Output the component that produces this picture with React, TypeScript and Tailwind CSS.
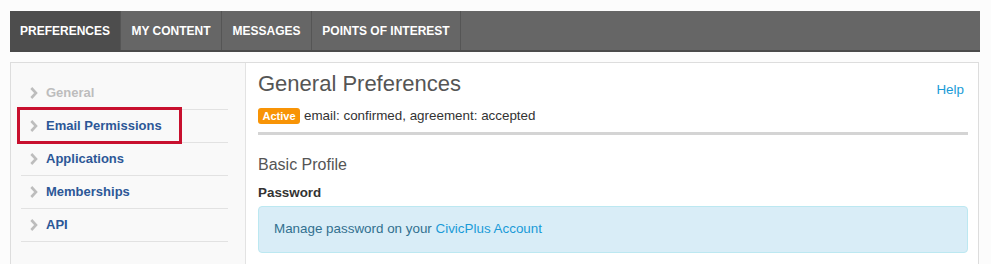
import React from "react";

const Chevron = () => (
  <svg width="8" height="12" viewBox="0 0 8 12" className="shrink-0">
    <polyline points="1.3,1 6,6 1.3,11" fill="none" stroke="#bdbdbd" strokeWidth="2.6" />
  </svg>
);

const tabs = [
  { t: "PREFERENCES", w: "w-[111px]" },
  { t: "MY CONTENT", w: "w-[101px]" },
  { t: "MESSAGES", w: "w-[90px]" },
  { t: "POINTS OF INTEREST", w: "w-[149px]" },
];
const items = ["General", "Email Permissions", "Applications", "Memberships", "API"];

export default function App() {
  return (
    <div
      className="w-full h-[264px] bg-[#fcfcfc] pt-[11px] pl-[10px] pr-[11px] overflow-hidden"
      style={{ fontFamily: '"Liberation Sans", Arial, sans-serif' }}
    >
      <div className="flex h-[41px] bg-[#666666] border-b-2 border-[#4b4b4b]">
        {tabs.map((t, i) => (
          <div
            key={t.t}
            className={`flex items-center justify-center pt-[1px] ${t.w} border-r border-[#555555] text-[12px] font-bold text-white ${
              i === 0 ? "bg-[#4d4d4d]" : ""
            }`}
          >
            {t.t}
          </div>
        ))}
      </div>

      <div className="mt-[10px] flex h-[220px] border border-[#dddddd] border-b-0 mr-[1px]">
        <div className="w-[235px] shrink-0 bg-[#f9f9f9] border-r border-[#e3e3e3] pt-[14px] pl-[10px] pr-[17px]">
          {items.map((it, i) => (
            <div
              key={it}
              className="relative flex items-center h-[33px] border-b border-[#e2e2e2] pl-[9px] gap-[8px]"
            >
              <Chevron />
              <span
                className={`text-[13px] font-bold ${i === 0 ? "text-[#bdbdbd]" : "text-[#2c5797]"}`}
              >
                {it}
              </span>
              {i === 1 && (
                <div className="absolute left-[-4px] top-[-3px] w-[165px] h-[37px] border-[3px] border-[#c8102e]" />
              )}
            </div>
          ))}
        </div>

        <div className="flex-1 bg-white pl-[12px] pr-[10px] pt-[9px]">
          <div className="flex items-start justify-between h-[24px]">
            <div className="text-[22px] leading-[24px] text-[#555555]">General Preferences</div>
            <a className="mt-[10px] mr-[4px] text-[13.4px] leading-[16px] text-[#1a9bd7]">Help</a>
          </div>
          <div className="mt-[12px] flex items-center h-[16px] gap-[4px]">
            <span className="flex items-center justify-center w-[42px] h-[16px] rounded-[3px] bg-[#f89406] text-white text-[11px] font-bold">
              Active
            </span>
            <span className="text-[13.4px] text-[#333333]">email: confirmed, agreement: accepted</span>
          </div>
          <div className="mt-[8px] h-[3px] bg-[#d4d4d4]" />
          <div className="mt-[20px] text-[16px] leading-[20px] text-[#555555]">Basic Profile</div>
          <div className="mt-[9px] text-[13.4px] leading-[18px] font-bold text-[#333333]">Password</div>
          <div className="mt-[4px] rounded-[4px] border border-[#bce8f1] bg-[#d9edf7] px-[15px] pt-[12px] pb-[13px] text-[13.4px] leading-[20px] text-[#31708f]">
            Manage password on your <a className="text-[#1a9bd7]">CivicPlus Account</a>
          </div>
        </div>
      </div>
    </div>
  );
}
